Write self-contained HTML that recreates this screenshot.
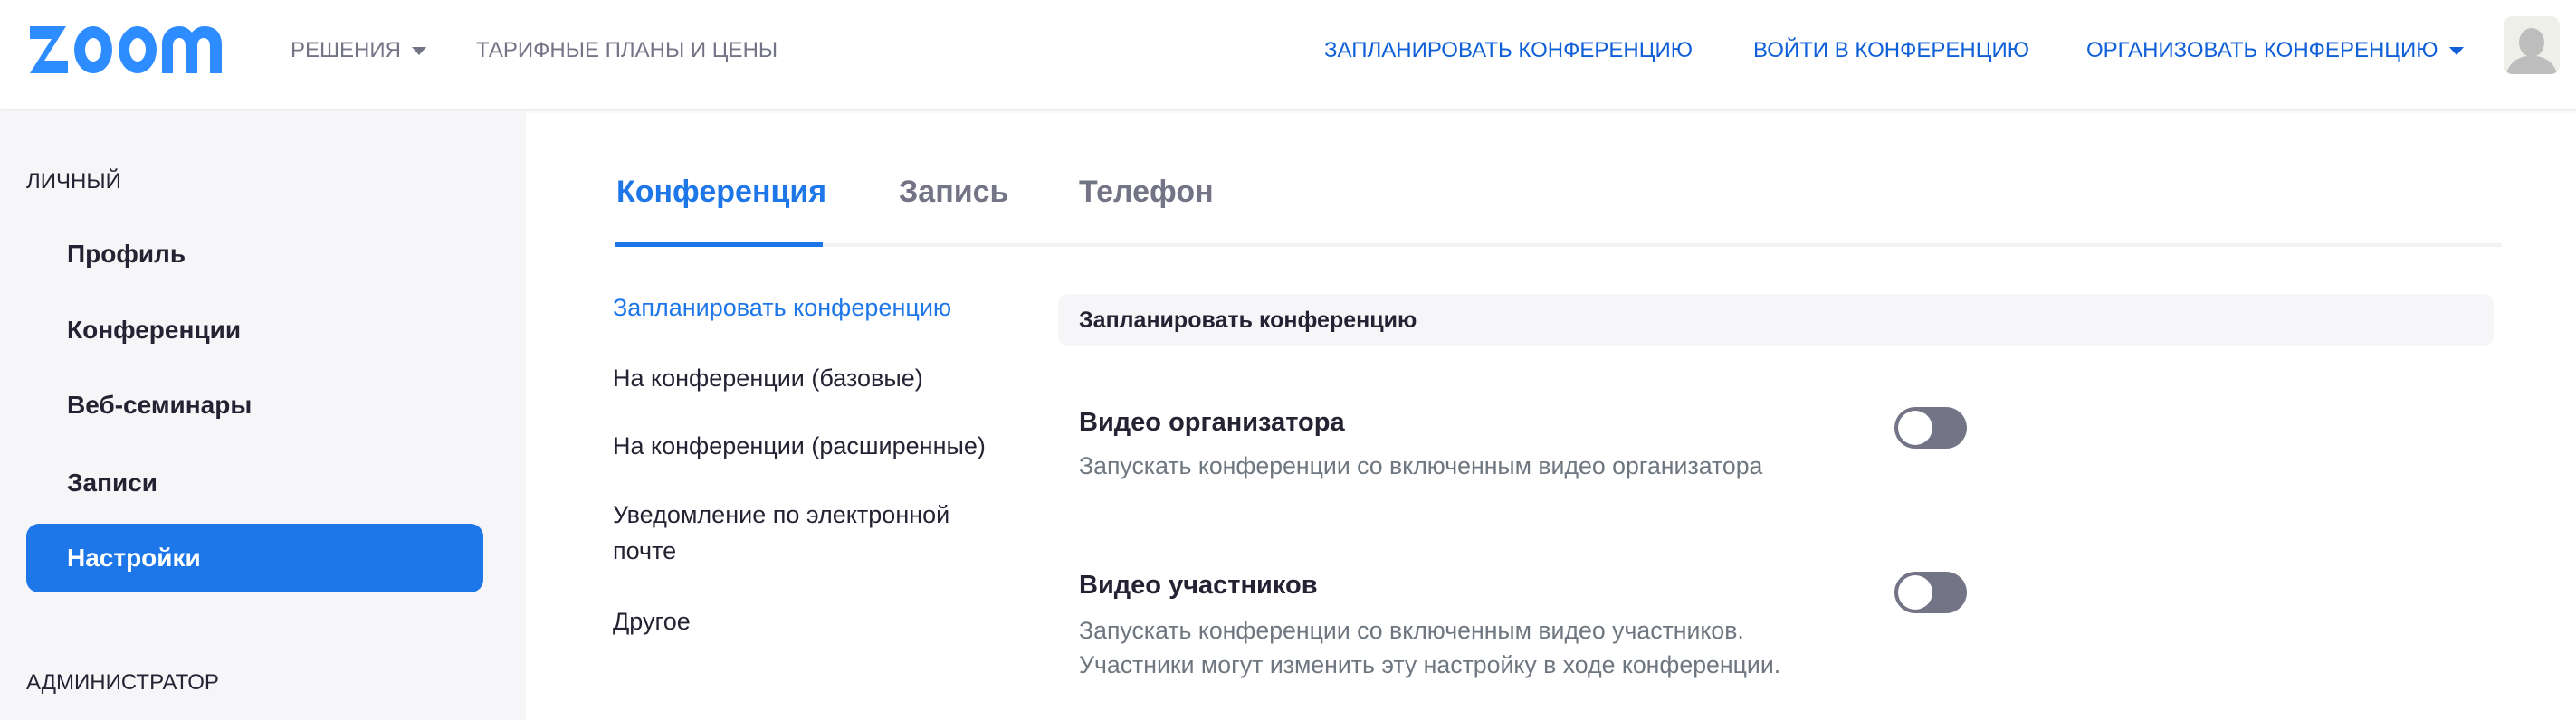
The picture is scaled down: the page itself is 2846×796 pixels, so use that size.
<!DOCTYPE html>
<html><head><meta charset="utf-8"><style>
*{margin:0;padding:0;box-sizing:border-box}
body{width:2846px;height:796px;overflow:hidden;background:#fff;font-family:"Liberation Sans","Noto Sans CJK SC",sans-serif;position:relative;color:#232333}
.a{position:absolute;white-space:nowrap;line-height:1}
.hdr{position:absolute;left:0;top:0;width:2846px;height:122px;background:#fff;border-bottom:2px solid #ececef;box-shadow:0 2px 3px rgba(0,0,0,.05)}
.nav{font-size:24px;color:#747487}
.navb{font-size:24px;color:#0e5fd8}
.side{position:absolute;left:0;top:123px;width:581px;height:673px;background:#f6f6f8}
.si{font-size:28px;font-weight:bold;color:#232333}
.sub{font-size:27px;color:#232333}
.desc{font-size:26.7px;color:#6e7680}
.tg{position:absolute;width:80px;height:46px;border-radius:23px;background:#747487}
.tg:after{content:"";position:absolute;left:4px;top:4px;width:38px;height:38px;border-radius:50%;background:#fff}
.tri{display:inline-block;width:0;height:0;border-left:8px solid transparent;border-right:8px solid transparent;border-top:9px solid currentColor;vertical-align:middle;margin-left:12px}
</style></head><body>
<div class="hdr"></div>
<svg class="a" style="left:29px;top:27px" width="226" height="56" viewBox="0 0 222 56">
<g fill="#2d8cff">
<path d="M2 2h40l-24 38h26v14H2l24-38H2z"/>
<ellipse cx="72" cy="28" rx="21" ry="26"/>
<ellipse cx="121" cy="28" rx="21" ry="26"/>
<path d="M148 54V22c0-12 8-20 19-20 6 0 11 3 14 7 3-4 8-7 14-7 12 0 19 8 19 20v32h-13V24c0-6-3-9-7-9s-7 3-7 9v30h-13V24c0-6-3-9-7-9s-7 3-7 9v30z"/>
</g>
<g fill="#fff"><ellipse cx="72" cy="28" rx="9" ry="13"/><ellipse cx="121" cy="28" rx="9" ry="13"/></g>
</svg>
<div class="a nav" style="left:321px;top:44px">РЕШЕНИЯ<span class="tri"></span></div>
<div class="a nav" style="left:526px;top:44px">ТАРИФНЫЕ ПЛАНЫ И ЦЕНЫ</div>
<div class="a navb" style="left:1463px;top:44px">ЗАПЛАНИРОВАТЬ КОНФЕРЕНЦИЮ</div>
<div class="a navb" style="left:1937px;top:44px">ВОЙТИ В КОНФЕРЕНЦИЮ</div>
<div class="a navb" style="left:2305px;top:44px">ОРГАНИЗОВАТЬ КОНФЕРЕНЦИЮ<span class="tri"></span></div>
<div class="a" style="left:2766px;top:18px;width:62px;height:64px;border-radius:10px;background:#efefea;overflow:hidden">
<div style="position:absolute;left:17px;top:13px;width:28px;height:32px;border-radius:50%;background:#bdbdbd"></div>
<div style="position:absolute;left:2px;top:44px;width:58px;height:40px;border-radius:26px 26px 8px 8px;background:#bdbdbd"></div>
</div>
<div class="side"></div>
<div class="a" style="left:29px;top:189px;font-size:24px;color:#232333">ЛИЧНЫЙ</div>
<div class="a si" style="left:74px;top:267px">Профиль</div>
<div class="a si" style="left:74px;top:351px">Конференции</div>
<div class="a si" style="left:74px;top:434px">Веб-семинары</div>
<div class="a si" style="left:74px;top:520px">Записи</div>
<div class="a" style="left:29px;top:579px;width:505px;height:76px;border-radius:14px;background:#1e77e8"></div>
<div class="a si" style="left:74px;top:603px;color:#fff">Настройки</div>
<div class="a" style="left:29px;top:743px;font-size:24px;color:#232333">АДМИНИСТРАТОР</div>
<div class="a" style="left:681px;top:195px;font-size:34px;font-weight:bold;color:#1e77e8">Конференция</div>
<div class="a" style="left:993px;top:195px;font-size:34px;font-weight:bold;color:#747487">Запись</div>
<div class="a" style="left:1192px;top:195px;font-size:34px;font-weight:bold;color:#747487">Телефон</div>
<div class="a" style="left:679px;top:269px;width:2085px;height:4px;background:#f3f3f5"></div>
<div class="a" style="left:679px;top:268px;width:230px;height:5px;background:#1e77e8"></div>
<div class="a sub" style="left:677px;top:327px;color:#1e77e8">Запланировать конференцию</div>
<div class="a sub" style="left:677px;top:405px">На конференции (базовые)</div>
<div class="a sub" style="left:677px;top:480px">На конференции (расширенные)</div>
<div class="a sub" style="left:677px;top:556px">Уведомление по электронной</div>
<div class="a sub" style="left:677px;top:596px">почте</div>
<div class="a sub" style="left:677px;top:674px">Другое</div>
<div class="a" style="left:1169px;top:325px;width:1586px;height:58px;border-radius:12px;background:#f6f6f8"></div>
<div class="a" style="left:1192px;top:342px;font-size:25px;font-weight:bold;color:#232333">Запланировать конференцию</div>
<div class="a" style="left:1192px;top:453px;font-size:29px;font-weight:bold">Видео организатора</div>
<div class="a desc" style="left:1192px;top:502px">Запускать конференции со включенным видео организатора</div>
<div class="tg" style="left:2093px;top:450px"></div>
<div class="a" style="left:1192px;top:633px;font-size:29px;font-weight:bold">Видео участников</div>
<div class="a desc" style="left:1192px;top:684px">Запускать конференции со включенным видео участников.</div>
<div class="a desc" style="left:1192px;top:722px">Участники могут изменить эту настройку в ходе конференции.</div>
<div class="tg" style="left:2093px;top:632px"></div>
</body></html>
